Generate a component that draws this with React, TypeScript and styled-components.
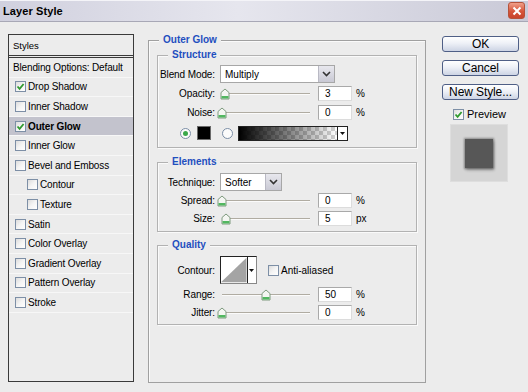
import React from 'react'
import styled, { createGlobalStyle } from 'styled-components'

const GlobalStyle = createGlobalStyle`
  html, body {
    margin: 0;
    padding: 0;
  }
  body {
    width: 528px;
    height: 392px;
    overflow: hidden;
    background: #ececec;
    font-family: "Liberation Sans", Arial, sans-serif;
    font-size: 10px;
    color: #000;
  }
`

const Window = styled.div`
  width: 528px;
  height: 392px;
  display: flex;
  flex-direction: column;
  background: #ececec;
`

const TitleBar = styled.div`
  height: 22px;
  box-sizing: border-box;
  display: flex;
  align-items: center;
  justify-content: space-between;
  padding: 0 3px 0 3px;
  background: linear-gradient(to right, #d0d0de 0%, #e6e6ee 45%, #c9c9d7 100%);
  border-bottom: 1px solid #a8a8b6;
  box-shadow: inset 0 1px 0 #f4f4f8;
`

const Title = styled.span`
  font-weight: bold;
  font-size: 11px;
  letter-spacing: 0.1px;
`

const CloseButton = styled.div`
  width: 17px;
  height: 17px;
  box-sizing: border-box;
  border: 1px solid #b5523a;
  border-radius: 3px;
  background: linear-gradient(to bottom, #f0a08a, #d6553a 55%, #c8442c);
  display: flex;
  align-items: center;
  justify-content: center;
`

const Content = styled.div`
  display: flex;
  align-items: flex-start;
  padding: 10px 0 0 8px;
`

/* ---------- left list ---------- */

const StylesPanel = styled.div`
  margin-top: 2px;
  width: 126px;
  height: 348px;
  box-sizing: border-box;
  border: 1px solid #3a3a3a;
  display: flex;
  flex-direction: column;
`

const PanelHeader = styled.div`
  height: 20px;
  display: flex;
  align-items: center;
  padding-left: 4px;
  font-size: 9.5px;
  border-bottom: 3px double #3a3a3a;
`

const ListRow = styled.div<{ $selected?: boolean; $indent?: number }>`
  height: 19.6px;
  box-sizing: border-box;
  display: flex;
  align-items: center;
  gap: 2px;
  padding-left: ${p => 6 + (p.$indent || 0) * 12}px;
  background: ${p => (p.$selected ? '#c3c3cd' : 'transparent')};
  border-bottom: 1px solid #f7f7f7;
  font-weight: ${p => (p.$selected ? 'bold' : 'normal')};
  letter-spacing: -0.15px;
  white-space: nowrap;
`

const PlainRowText = styled.span`
  margin-left: -2px;
`

const Box = styled.span`
  width: 11px;
  height: 11px;
  flex: none;
  box-sizing: border-box;
  border: 1px solid #7d8fa6;
  background: linear-gradient(135deg, #dcdcdc 0%, #f4f4f4 50%, #ffffff 100%);
  display: inline-flex;
  align-items: center;
  justify-content: center;
`

const Check = ({ checked }: { checked?: boolean }) => (
  <Box>
    {checked && (
      <svg width="9" height="9" viewBox="0 0 9 9">
        <path d="M1.5 4.5 L3.6 6.8 L7.6 2" fill="none" stroke="#2f9a2f" strokeWidth="1.8" />
      </svg>
    )}
  </Box>
)

/* ---------- middle fieldsets ---------- */

const MainGroup = styled.fieldset`
  margin: 2px 0 0 14px;
  padding: 0;
  width: 278px;
  height: 349px;
  box-sizing: border-box;
  border: 1px solid #a0a0a0;
  box-shadow: inset 1px 1px 0 #fafafa;
  min-inline-size: 0;
`

const SubGroup = styled.fieldset<{ $top: number }>`
  margin: ${p => p.$top}px 8px 0 8px;
  padding: 0;
  border: 1px solid #b2b2b2;
  box-shadow: inset 1px 1px 0 #fafafa, 1px 1px 0 #fafafa;
  min-inline-size: 0;
`

const Legend = styled.legend`
  margin-left: 10px;
  padding: 0 4px;
  line-height: 12px;
  font-size: 10px;
  font-weight: bold;
  color: #1f4fbf;
  background: #ececec;
`

const GroupBody = styled.div<{ $pt: number; $pb: number }>`
  display: flex;
  flex-direction: column;
  padding: ${p => p.$pt}px 0 ${p => p.$pb}px 0;
`

const Row = styled.div<{ $h: number; $mt?: number }>`
  display: flex;
  align-items: center;
  height: ${p => p.$h}px;
  margin-top: ${p => p.$mt || 0}px;
`

const Label = styled.span`
  width: 57px;
  margin-right: 5px;
  text-align: right;
  white-space: nowrap;
  letter-spacing: -0.1px;
`

const Select = styled.div<{ $w: number }>`
  width: ${p => p.$w}px;
  height: 18px;
  box-sizing: border-box;
  border: 1px solid #a7a7a7;
  background: #fff;
  display: flex;
  align-items: center;
  justify-content: space-between;
  padding-left: 4px;
`

const SelectButton = styled.span`
  width: 16px;
  height: 16px;
  box-sizing: border-box;
  border-left: 1px solid #b9b9c4;
  background: linear-gradient(to bottom, #e8e8ee, #c9c9d4);
  display: flex;
  align-items: center;
  justify-content: center;
`

const Chevron = () => (
  <svg width="9" height="6" viewBox="0 0 9 6">
    <path d="M1 1 L4.5 4.5 L8 1" fill="none" stroke="#333" strokeWidth="1.6" />
  </svg>
)

const Track = styled.div`
  position: relative;
  width: 92px;
  height: 15px;
  margin-right: 6px;
  &::before {
    content: '';
    position: absolute;
    left: 2px;
    right: 2px;
    top: 7px;
    height: 1px;
    background: #b0aca2;
    box-shadow: 0 1px 0 #fbfbfb;
  }
`

const Thumb = styled.svg`
  position: absolute;
  top: 2px;
  width: 10px;
  height: 12px;
`

const Slider = ({ value }: { value: number }) => (
  <Track>
    <Thumb style={{ left: 2 + (value / 100) * 88 - 5 }} viewBox="0 0 10 12">
      <path d="M1 4.5 L5 1 L9 4.5 L9 11 L1 11 Z" fill="#f4f6f2" stroke="#7f9a7f" strokeWidth="1" />
      <rect x="1.5" y="8" width="7" height="2.5" fill="#52b760" />
    </Thumb>
  </Track>
)

const NumberBox = styled.div`
  width: 34px;
  height: 15px;
  box-sizing: border-box;
  border: 1px solid #a9a9a9;
  border-right-color: #dcdcdc;
  border-bottom-color: #dcdcdc;
  background: #fff;
  padding-left: 6px;
  display: flex;
  align-items: center;
`

const Unit = styled.span`
  margin-left: 4px;
`

const Radio = styled.span<{ $on?: boolean }>`
  width: 11px;
  height: 11px;
  box-sizing: border-box;
  border-radius: 50%;
  border: 1px solid #7b8ea6;
  background: #fbfbfb;
  display: flex;
  align-items: center;
  justify-content: center;
  &::after {
    content: '';
    width: 5px;
    height: 5px;
    border-radius: 50%;
    background: ${p => (p.$on ? '#3aa84a' : 'transparent')};
  }
`

const Spacer = styled.span<{ $w: number }>`
  width: ${p => p.$w}px;
  flex: none;
`

const Swatch = styled.span`
  width: 14px;
  height: 14px;
  box-sizing: border-box;
  border: 1px solid #6a6a6a;
  background: #000;
`

const GradientPicker = styled.div`
  width: 110px;
  height: 15px;
  box-sizing: border-box;
  border: 1px solid #222;
  display: flex;
`

const GradientFill = styled.span`
  flex: 1;
  background:
    linear-gradient(to right, #000 0%, rgba(0, 0, 0, 0.55) 45%, rgba(0, 0, 0, 0) 100%),
    conic-gradient(#d2d2d2 25%, #fff 0 50%, #d2d2d2 0 75%, #fff 0) 0 0 / 8px 8px;
`

const ArrowCell = styled.span`
  width: 9px;
  border-left: 1px solid #222;
  background: #fff;
  display: flex;
  align-items: center;
  justify-content: center;
`

const DownArrow = () => (
  <svg width="5" height="3" viewBox="0 0 5 3">
    <path d="M0 0 H5 L2.5 3 Z" fill="#111" />
  </svg>
)

const ContourPicker = styled.div`
  width: 37px;
  height: 28px;
  box-sizing: border-box;
  border: 1px solid #222;
  border-right-color: #888;
  border-bottom-color: #888;
  display: flex;
  margin-right: 11px;
`

const ContourCheck = styled.label`
  display: flex;
  align-items: center;
  gap: 2px;
`

/* ---------- right column ---------- */

const Actions = styled.div`
  margin: 4px 0 0 16px;
  width: 77px;
  display: flex;
  flex-direction: column;
  align-items: center;
`

const Button = styled.div`
  width: 77px;
  height: 16px;
  box-sizing: border-box;
  border: 1px solid #4f5f86;
  border-radius: 3px;
  background: linear-gradient(to bottom, #ffffff 0%, #eef1f7 45%, #cdd4e4 100%);
  font-size: 12px;
  display: flex;
  align-items: center;
  justify-content: center;
  margin-bottom: 8px;
  letter-spacing: -0.1px;
`

const PreviewToggle = styled.label`
  display: flex;
  align-items: center;
  gap: 3px;
  font-size: 11px;
  margin: 0 2px 4px 0;
`

const PreviewWell = styled.div`
  width: 58px;
  height: 58px;
  background: #d5d5d5;
  border: 1px solid #dedede;
  box-sizing: border-box;
  display: flex;
  align-items: center;
  justify-content: center;
  margin-left: -3px;
`

const PreviewSquare = styled.div`
  width: 28px;
  height: 29px;
  background: #575757;
  box-shadow: 0 0 2px 1px rgba(0, 0, 0, 0.35), 1px 2px 3px rgba(0, 0, 0, 0.3);
`

const listItems: { name: string; checked?: boolean; selected?: boolean; indent?: number }[] = [
  { name: 'Drop Shadow', checked: true },
  { name: 'Inner Shadow' },
  { name: 'Outer Glow', checked: true, selected: true },
  { name: 'Inner Glow' },
  { name: 'Bevel and Emboss' },
  { name: 'Contour', indent: 1 },
  { name: 'Texture', indent: 1 },
  { name: 'Satin' },
  { name: 'Color Overlay' },
  { name: 'Gradient Overlay' },
  { name: 'Pattern Overlay' },
  { name: 'Stroke' },
]

const SliderRow = ({ label, value, unit, mt }: { label: string; value: number; unit: string; mt?: number }) => (
  <Row $h={15} $mt={mt}>
    <Label>{label}</Label>
    <Slider value={value} />
    <NumberBox>{value}</NumberBox>
    <Unit>{unit}</Unit>
  </Row>
)

const App: React.FC = () => (
  <Window>
    <GlobalStyle />
    <TitleBar>
      <Title>Layer Style</Title>
      <CloseButton>
        <svg width="10" height="10" viewBox="0 0 10 10">
          <path d="M1.5 1.5 L8.5 8.5 M8.5 1.5 L1.5 8.5" stroke="#fff" strokeWidth="2" />
        </svg>
      </CloseButton>
    </TitleBar>

    <Content>
      <StylesPanel>
        <PanelHeader>Styles</PanelHeader>
        <ListRow>
          <PlainRowText>Blending Options: Default</PlainRowText>
        </ListRow>
        {listItems.map(item => (
          <ListRow key={item.name} $selected={item.selected} $indent={item.indent}>
            <Check checked={item.checked} />
            <span>{item.name}</span>
          </ListRow>
        ))}
      </StylesPanel>

      <MainGroup>
        <Legend>Outer Glow</Legend>

        <SubGroup $top={3}>
          <Legend>Structure</Legend>
          <GroupBody $pt={4} $pb={6}>
            <Row $h={18}>
              <Label>Blend Mode:</Label>
              <Select $w={115}>
                Multiply
                <SelectButton>
                  <Chevron />
                </SelectButton>
              </Select>
            </Row>
            <SliderRow label="Opacity:" value={3} unit="%" mt={3} />
            <SliderRow label="Noise:" value={0} unit="%" mt={4} />
            <Row $h={16} $mt={5}>
              <Spacer $w={22} />
              <Radio $on />
              <Spacer $w={6} />
              <Swatch />
              <Spacer $w={11} />
              <Radio />
              <Spacer $w={5} />
              <GradientPicker>
                <GradientFill />
                <ArrowCell>
                  <DownArrow />
                </ArrowCell>
              </GradientPicker>
            </Row>
          </GroupBody>
        </SubGroup>

        <SubGroup $top={8}>
          <Legend>Elements</Legend>
          <GroupBody $pt={5} $pb={5}>
            <Row $h={18}>
              <Label>Technique:</Label>
              <Select $w={62}>
                Softer
                <SelectButton>
                  <Chevron />
                </SelectButton>
              </Select>
            </Row>
            <SliderRow label="Spread:" value={0} unit="%" mt={2} />
            <SliderRow label="Size:" value={5} unit="px" mt={3} />
          </GroupBody>
        </SubGroup>

        <SubGroup $top={7}>
          <Legend>Quality</Legend>
          <GroupBody $pt={5} $pb={4}>
            <Row $h={28}>
              <Label>Contour:</Label>
              <ContourPicker>
                <svg width="27" height="26" viewBox="0 0 27 26" style={{ display: 'block', background: '#fff' }}>
                  <path d="M0 26 L27 0 L27 26 Z" fill="#a4a4a4" />
                </svg>
                <ArrowCell>
                  <DownArrow />
                </ArrowCell>
              </ContourPicker>
              <ContourCheck>
                <Check />
                <span>Anti-aliased</span>
              </ContourCheck>
            </Row>
            <SliderRow label="Range:" value={50} unit="%" mt={3} />
            <SliderRow label="Jitter:" value={0} unit="%" mt={3} />
          </GroupBody>
        </SubGroup>
      </MainGroup>

      <Actions>
        <Button>OK</Button>
        <Button>Cancel</Button>
        <Button>New Style...</Button>
        <PreviewToggle>
          <Check checked />
          <span>Preview</span>
        </PreviewToggle>
        <PreviewWell>
          <PreviewSquare />
        </PreviewWell>
      </Actions>
    </Content>
  </Window>
)

export default App
